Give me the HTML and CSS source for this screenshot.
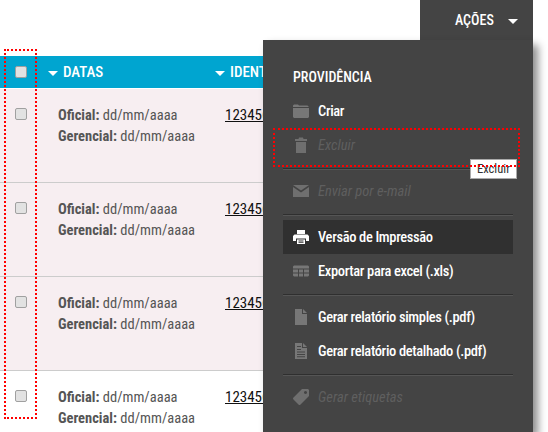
FILE: index.html
```html
<!DOCTYPE HTML>
<html>
<head>
  <meta http-equiv="Content-Type" content="text/html; charset=UTF-8">
  <title>Ações</title>
  <link rel="stylesheet" href="styles.css">
</head>
<body>
  <div class="topbar"></div>
  <table class="grid">
    <thead>
      <tr>
        <th class="check-col"><input type="checkbox"></th>
        <th class="date-col"><span class="caret"></span>DATAS</th>
        <th><span class="caret"></span>IDENTIFICADOR</th>
      </tr>
    </thead>
    <tbody>
      <tr class="pink">
        <td class="check-col"><input type="checkbox"></td>
        <td class="date-col"><p><strong>Oficial:</strong> dd/mm/aaaa</p><p><strong>Gerencial:</strong> dd/mm/aaaa</p></td>
        <td class="id-col"><a href="#">1234567890</a></td>
      </tr>
      <tr class="pink">
        <td class="check-col"><input type="checkbox"></td>
        <td class="date-col"><p><strong>Oficial:</strong> dd/mm/aaaa</p><p><strong>Gerencial:</strong> dd/mm/aaaa</p></td>
        <td class="id-col"><a href="#">1234567890</a></td>
      </tr>
      <tr class="pink">
        <td class="check-col"><input type="checkbox"></td>
        <td class="date-col"><p><strong>Oficial:</strong> dd/mm/aaaa</p><p><strong>Gerencial:</strong> dd/mm/aaaa</p></td>
        <td class="id-col"><a href="#">1234567890</a></td>
      </tr>
      <tr class="tail">
        <td class="check-col"><input type="checkbox"></td>
        <td class="date-col"><p><strong>Oficial:</strong> dd/mm/aaaa</p><p><strong>Gerencial:</strong> dd/mm/aaaa</p></td>
        <td class="id-col"><a href="#">1234567890</a></td>
      </tr>
    </tbody>
  </table>

  <div class="actions-tab">AÇÕES<span class="caret"></span></div>
  <div class="actions-menu">
    <h2>PROVIDÊNCIA</h2>
    <ul class="group">
      <li class="item">
        <svg class="icon" viewBox="0 0 16 14"><path d="M0 3V1.500L1 .5h4l1 1h8.500L16 3zM0 4h16v9l-1 1H1l-1-1z"/></svg>
        Criar
      </li>
      <li class="item off">
        <svg class="icon" viewBox="0 0 16 16"><path d="M2 2h3.500l.5-1.500h4l.5 1.500H14v2H2zM3 5h10v11H3z"/></svg>
        Excluir
      </li>
    </ul>
    <ul class="group">
      <li class="item off">
        <svg class="icon" viewBox="0 0 16 12"><path d="M0 0h16L8 5.500zM0 2l8 5.500L16 2v10H0z"/></svg>
        Enviar por e-mail
      </li>
    </ul>
    <ul class="group">
      <li class="item current">
        <svg class="icon" viewBox="0 0 16 14"><path fill-rule="evenodd" d="M4 0h8v4H4zM1.500 4.500h13L16 6v5h-3V8.500H3V11H0V6zM4 9.500h8V14H4zM5.500 10.500v1h5v-1zM5.500 12.200v.8h5v-.8z"/></svg>
        Versão de Impressão
      </li>
      <li class="item">
        <svg class="icon" viewBox="0 0 16 11"><path d="M1 0h14l1 1v2H0V1zM0 4h5v3H0zM6 4h4v3H6zM11 4h5v3h-5zM0 8h5v3H1l-1-1zM6 8h4v3H6zM11 8h5v2l-1 1h-4z"/></svg>
        Exportar para excel (.xls)
      </li>
    </ul>
    <ul class="group">
      <li class="item">
        <svg class="icon" viewBox="0 0 16 16"><path d="M2 0h7v5h5v11H2zM10 0l4 4h-4z"/></svg>
        Gerar relatório simples (.pdf)
      </li>
      <li class="item">
        <svg class="icon" viewBox="0 0 16 16"><path fill-rule="evenodd" d="M2 0h7v5h5v11H2zM10 0l4 4h-4zM4 3v1h4V3zM4 6v1h4V6zM4 8.500v1h8v-1zM4 11v1h8v-1zM4 13.300v1h8v-1z"/></svg>
        Gerar relatório detalhado (.pdf)
      </li>
    </ul>
    <ul class="group last">
      <li class="item off">
        <svg class="icon" viewBox="0 0 16 16"><path fill-rule="evenodd" d="M9 0h6l1 1v6l-8.500 8.500q-1 1-2 0L.5 10.500q-1-1 0-2zM12.500 2a1.500 1.500 0 1 0 .01 0z"/></svg>
        Gerar etiquetas
      </li>
    </ul>
  </div>

  <div class="tooltip">Excluir</div>
  <div class="mark mark-col"></div>
  <div class="mark mark-item"></div>
</body>
</html>
```

FILE: styles.css
```css
body, html {
    background-color: #fff;
    padding: 0;
    margin: 0;
    height: 432px;
    overflow: hidden;
    font-family: Roboto, Arial, sans-serif;
    font-stretch: 75%;
    font-size: 14.5px;
    color: #555;
}

.topbar {
    height: 56px;
}

.grid {
    width: 263px;
    table-layout: fixed;
    border-collapse: separate;
    border-spacing: 0;
}

.grid th {
    box-sizing: border-box;
    height: 33px;
    padding: 0;
    border-bottom: 1px solid #fff;
    background-color: #00a5d0;
    color: #fff;
    font-size: 15px;
    font-weight: 500;
    text-align: left;
    white-space: nowrap;
    overflow: hidden;
}

.grid td {
    box-sizing: border-box;
    height: 94px;
    padding: 16px 0 0;
    border-bottom: 1px solid #ccc;
    vertical-align: top;
    white-space: nowrap;
    overflow: hidden;
}

.pink td {
    background-color: #f7eef1;
}

.tail td {
    border-bottom: 0;
}

.grid .check-col {
    width: 48px;
    padding-left: 15px;
}

.date-col {
    width: 167px;
}

td.date-col,
td.id-col {
    padding-left: 10px;
}

.grid input {
    appearance: none;
    box-sizing: border-box;
    width: 12px;
    height: 12px;
    margin: 0;
    display: block;
    border: 1px solid #a0a0a0;
    border-radius: 2px;
    background-color: #e2e2e2;
}

td.check-col input {
    margin-top: 3px;
}

.grid p {
    margin: 0;
    line-height: 21px;
}

strong {
    font-weight: 700;
}

.grid a {
    color: #111;
    font-size: 15px;
    line-height: 21px;
}

.caret {
    display: inline-block;
    width: 0;
    height: 0;
    margin-right: 5px;
    vertical-align: middle;
    border-left: 5px solid transparent;
    border-right: 5px solid transparent;
    border-top: 5px solid #fff;
}

.actions-tab {
    position: absolute;
    left: 420px;
    top: 0;
    width: 113px;
    height: 40px;
    box-sizing: border-box;
    padding-left: 35px;
    background-color: #444;
    color: #fff;
    font-size: 14px;
    font-weight: 500;
    line-height: 40px;
}

.actions-tab .caret {
    margin: 0 0 0 14px;
}

.actions-menu {
    position: absolute;
    left: 263px;
    top: 40px;
    width: 270px;
    height: 392px;
    box-sizing: border-box;
    padding: 27px 20px 0;
    background-color: #444;
    box-shadow: 5px 5px 8px rgba(0, 0, 0, 0.45);
}

.actions-menu h2 {
    margin: 0 0 7px 10px;
    color: #fff;
    font-size: 14px;
    font-weight: 500;
    line-height: 20px;
}

.group {
    list-style: none;
    margin: 0 0 5px;
    padding: 0 0 6px;
    border-bottom: 1px solid #2f2f2f;
    box-shadow: 0 1px 0 #555;
}

.group.last {
    border-bottom: 0;
    box-shadow: none;
}

.item {
    display: flex;
    align-items: center;
    gap: 9px;
    height: 34px;
    padding-left: 10px;
    color: #fff;
    font-size: 14.5px;
    font-weight: 500;
    letter-spacing: -0.35px;
    fill: #777;
}

.icon {
    width: 16px;
    height: 16px;
    flex: none;
}

.item.off {
    color: #5f5f5f;
    font-style: italic;
    font-weight: 400;
    letter-spacing: 0;
    fill: #6f6f6f;
}

.item.current {
    background-color: #303030;
    fill: #fff;
}

.tooltip {
    position: absolute;
    left: 470px;
    top: 159px;
    width: 47px;
    height: 20px;
    box-sizing: border-box;
    border: 1px solid #aaa;
    background-color: #fff;
    color: #333;
    font-size: 12.5px;
    line-height: 18px;
    text-align: center;
}

.mark {
    position: absolute;
    border: 2px dotted #f00;
    box-sizing: border-box;
}

.mark-col {
    left: 4px;
    top: 49px;
    width: 33px;
    height: 370px;
}

.mark-item {
    left: 273px;
    top: 128px;
    width: 247px;
    height: 39px;
}
```
